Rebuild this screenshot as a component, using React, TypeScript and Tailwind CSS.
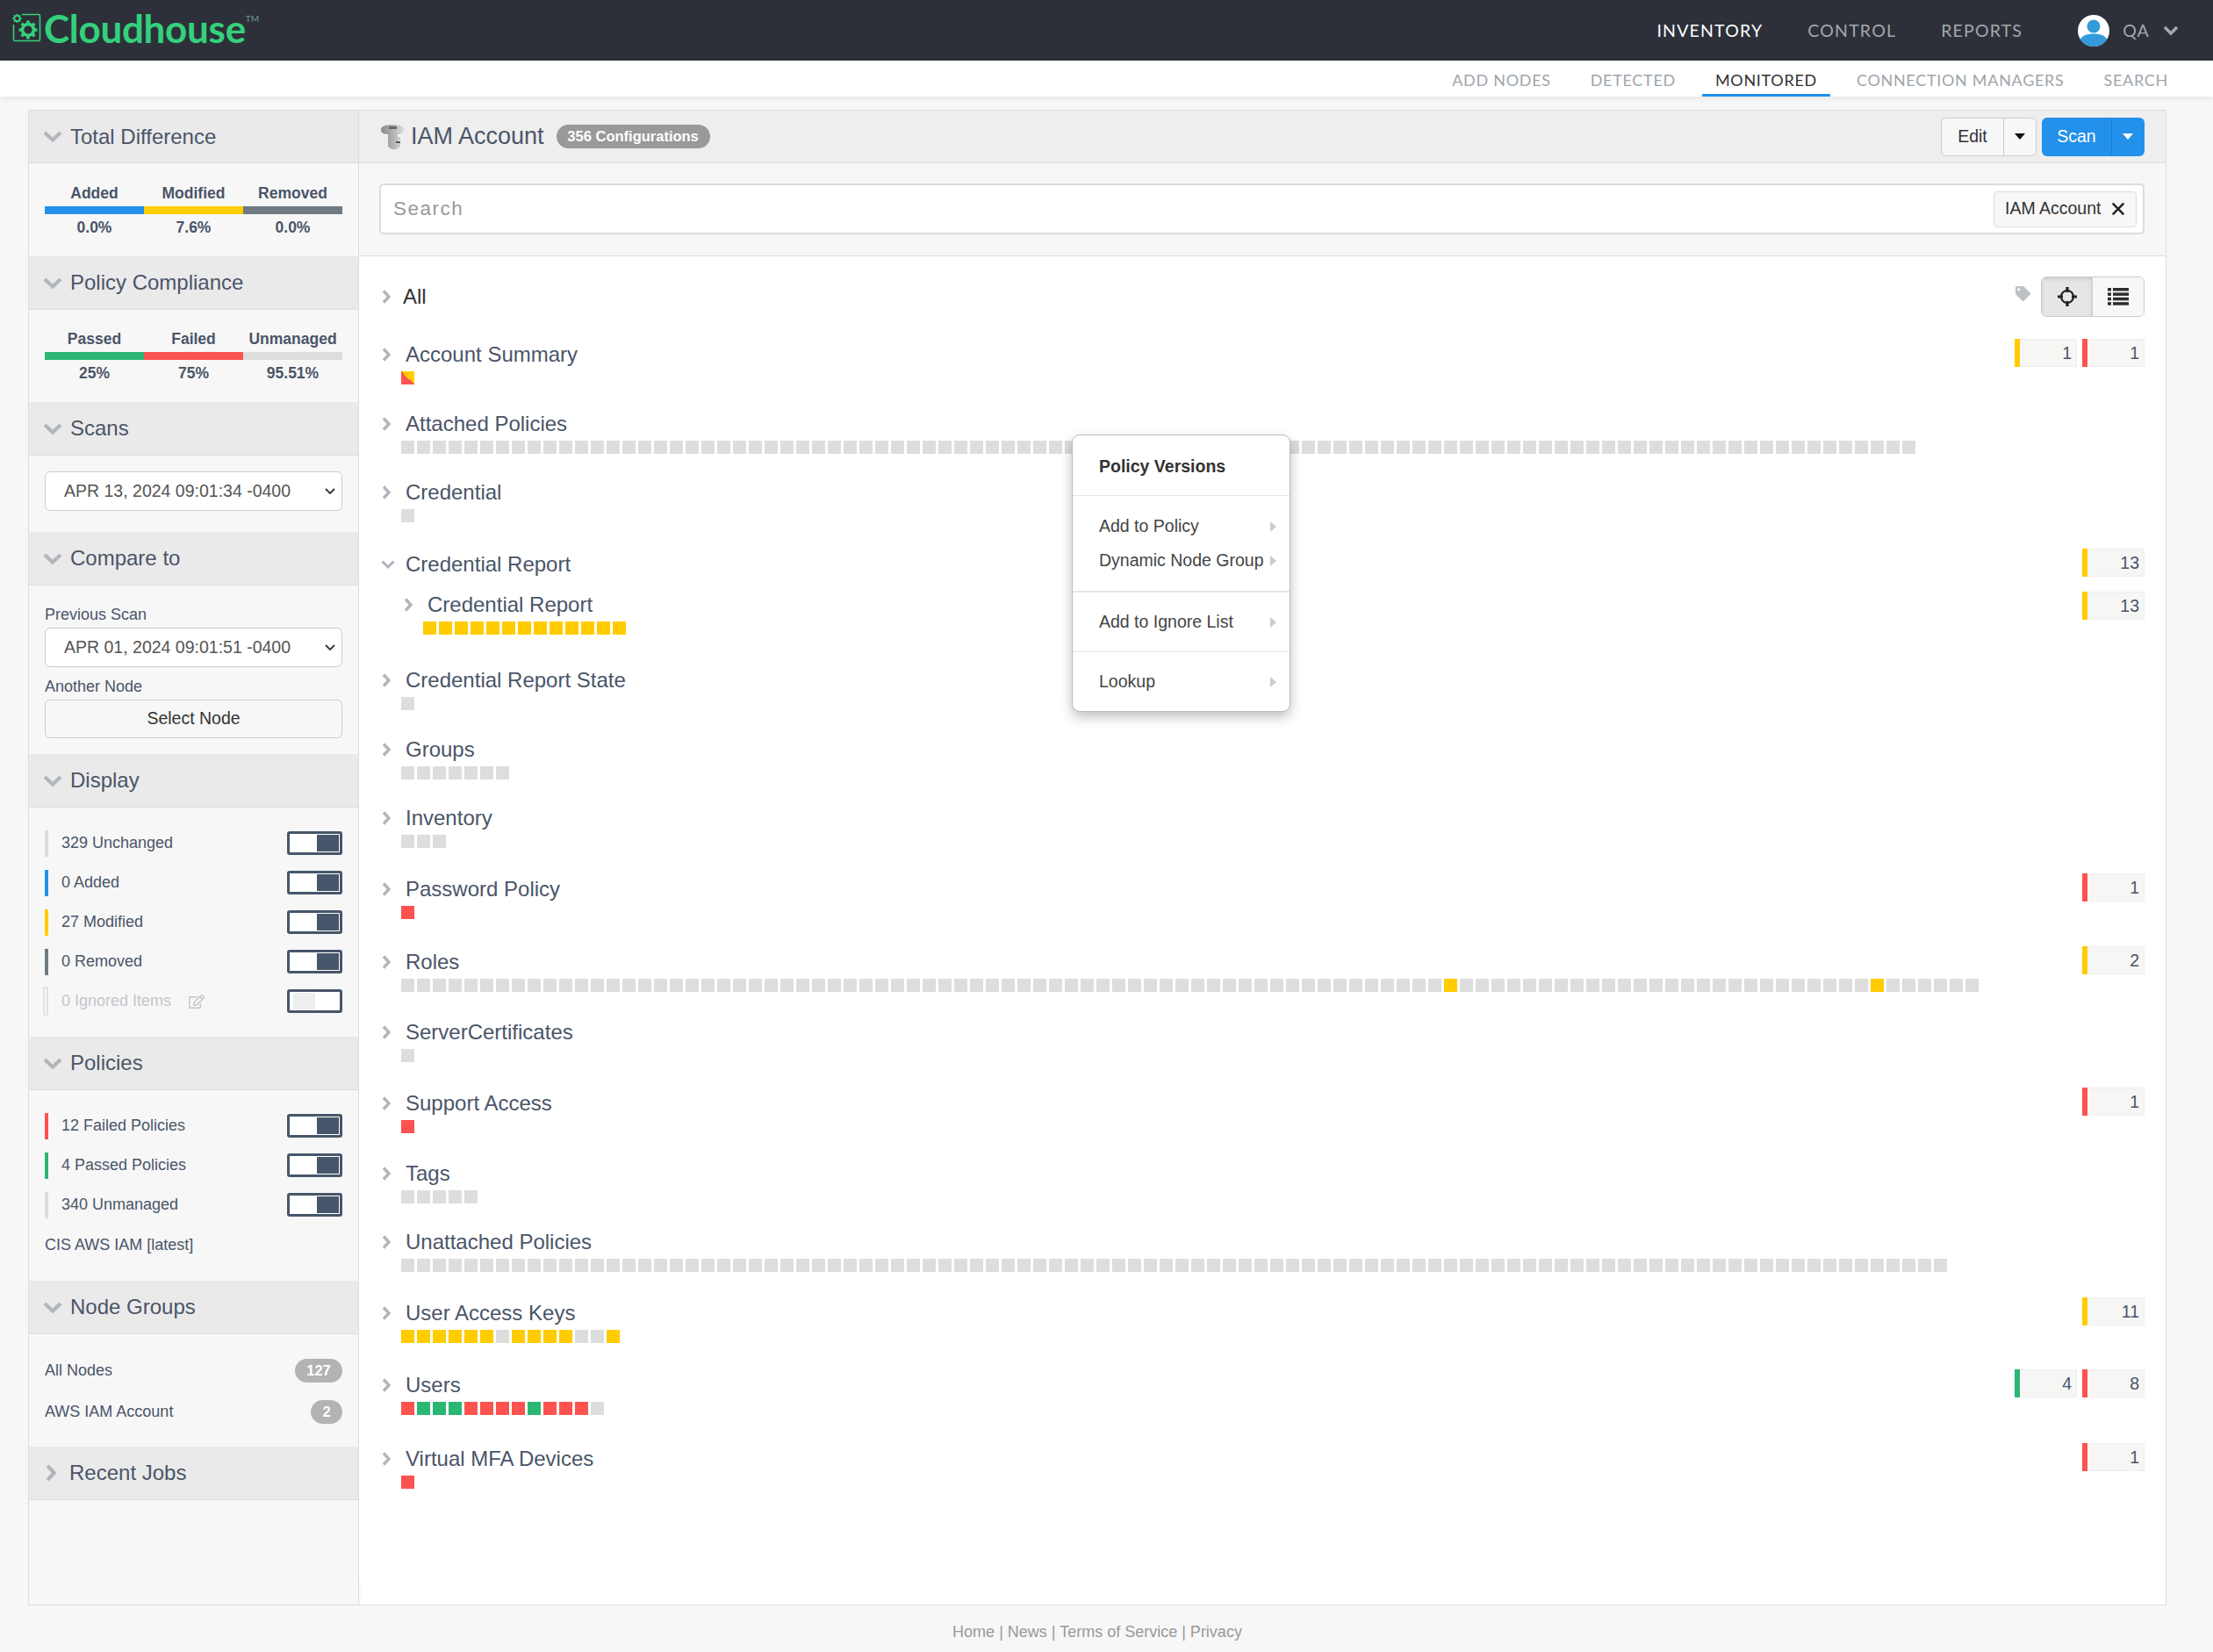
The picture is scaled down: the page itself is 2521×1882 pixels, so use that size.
import { FaRegEdit, FaTag } from "react-icons/fa";

const yellow = "bg-[#ffcc00]";
const red = "bg-[#fc5350]";
const green = "bg-[#2bb673]";
const gray = "bg-[#dddddd]";
const split = "bg-[linear-gradient(to_top_right,#fc5350_50%,#ffcc00_50%)]";

const many = (n: number, c = gray) => Array.from({ length: n }, () => c);

const rolesSquares = many(100).map((c, i) => (i === 66 || i === 93 ? yellow : c));

type Row = {
  name: string;
  height: string;
  squares?: string[];
  badges?: [string, number][];
  open?: boolean;
  sub?: boolean;
};

const rows: Row[] = [
  { name: "Account Summary", height: "h-[79px]", squares: [split], badges: [[yellow, 1], [red, 1]] },
  { name: "Attached Policies", height: "h-[78px]", squares: many(96) },
  { name: "Credential", height: "h-[82px]", squares: many(1) },
  { name: "Credential Report", height: "h-[46px]", open: true, badges: [[yellow, 13]] },
  { name: "Credential Report", height: "h-[86px]", sub: true, squares: many(13, yellow), badges: [[yellow, 13]] },
  { name: "Credential Report State", height: "h-[79px]", squares: many(1) },
  { name: "Groups", height: "h-[78px]", squares: many(7) },
  { name: "Inventory", height: "h-[81px]", squares: many(3) },
  { name: "Password Policy", height: "h-[83px]", squares: [red], badges: [[red, 1]] },
  { name: "Roles", height: "h-[80px]", squares: rolesSquares, badges: [[yellow, 2]] },
  { name: "ServerCertificates", height: "h-[81px]", squares: many(1) },
  { name: "Support Access", height: "h-[80px]", squares: [red], badges: [[red, 1]] },
  { name: "Tags", height: "h-[78px]", squares: many(5) },
  { name: "Unattached Policies", height: "h-[81px]", squares: many(98) },
  {
    name: "User Access Keys",
    height: "h-[82px]",
    squares: [...many(6, yellow), gray, ...many(4, yellow), gray, gray, yellow],
    badges: [[yellow, 11]],
  },
  {
    name: "Users",
    height: "h-[84px]",
    squares: [red, green, green, green, red, red, red, red, green, red, red, red, gray],
    badges: [[green, 4], [red, 8]],
  },
  { name: "Virtual MFA Devices", height: "h-[70px]", squares: [red], badges: [[red, 1]] },
];

const ChevronRight = ({ className = "" }: { className?: string }) => (
  <svg viewBox="0 0 11 16" className={"w-[11px] h-[16px] shrink-0 " + className} fill="none">
    <path d="M2 1.500l6 6.500-6 6.500" stroke="#b1b6bd" strokeWidth="3.400" />
  </svg>
);

const ChevronDown = ({ className = "w-[22px] h-[13px]" }: { className?: string }) => (
  <svg viewBox="0 0 22 13" className={"shrink-0 " + className} fill="none">
    <path d="M2 2l9 8.500L20 2" stroke="#b1b6bd" strokeWidth="4.200" />
  </svg>
);

const Gear = ({ cx, cy, r }: { cx: number; cy: number; r: number }) => (
  <g stroke="#34d07b" fill="none">
    <circle cx={cx} cy={cy} r={r} strokeWidth={r * 0.55} />
    {[0, 45, 90, 135].map((a) => (
      <line
        key={a}
        x1={cx - r * 1.6}
        y1={cy}
        x2={cx + r * 1.6}
        y2={cy}
        strokeWidth={r * 0.55}
        transform={`rotate(${a} ${cx} ${cy})`}
        strokeDasharray={`${r * 0.85} ${r * 1.5}`}
      />
    ))}
  </g>
);

const Logo = () => (
  <div className="flex items-center -mt-[6px]">
    <svg viewBox="0 0 33 33" className="w-[33px] h-[33px] ml-[14px] mr-[3px]" fill="none">
      <path d="M11 1.500h19a1.500 1.500 0 0 1 1.500 1.500v27a1.500 1.500 0 0 1-1.500 1.500H3A1.500 1.500 0 0 1 1.500 30V13" stroke="#34d07b" strokeWidth="1.600" />
      <Gear cx={5.5} cy={6} r={3.2} />
      <Gear cx={18} cy={19} r={6.5} />
    </svg>
    <span className="font-['Lato',sans-serif] text-[44px] leading-none font-bold text-[#34d07b] tracking-[-0.3px]">Cloudhouse</span>
    <span className="font-['Lato',sans-serif] text-[10px] leading-none text-[#6f9c88] self-start mt-[6px]">TM</span>
  </div>
);

const Avatar = () => (
  <svg viewBox="0 0 36 36" className="w-[36px] h-[36px]">
    <circle cx="18" cy="18" r="18" fill="#fff" />
    <circle cx="18" cy="13" r="7.500" fill="#339bdb" />
    <path d="M2.600 27.500C6 23 11 21.500 18 21.500s12 1.500 15.400 6A18 18 0 0 1 2.600 27.500z" fill="#339bdb" />
  </svg>
);

const KeyIcon = () => (
  <svg viewBox="0 0 30 32" className="w-[30px] h-[32px]">
    <defs>
      <linearGradient id="keyShade" x1="0" x2="1" y1="0" y2="0">
        <stop offset="0" stopColor="#8a8a8a" />
        <stop offset="0.55" stopColor="#b5b5b5" />
        <stop offset="1" stopColor="#dcdcdc" />
      </linearGradient>
    </defs>
    <path d="M2 8c0-4 5-6 13-6s13 2 13 6-4 5-7 5v3h3v4h-3v3h3v4l-4 3h-6l-4-3V13C6 13 2 12 2 8z" fill="url(#keyShade)" />
    <rect x="11" y="4" width="9" height="3" fill="#666" />
    <rect x="19" y="21" width="5" height="2" fill="#555" />
  </svg>
);

const Crosshair = () => (
  <svg viewBox="0 0 24 24" className="w-[24px] h-[24px]" fill="none" stroke="#222">
    <circle cx="12" cy="12" r="7" strokeWidth="2.200" />
    <path d="M12 1v6M12 17v6M1 12h6M17 12h6" strokeWidth="3.200" />
  </svg>
);

const ListIcon = () => (
  <svg viewBox="0 0 24 20" className="w-[24px] h-[20px]" fill="#2d2d2d">
    {[0, 5.4, 10.8, 16.2].map((y) => (
      <g key={y}>
        <rect x="0" y={y} width="4" height="3.500" />
        <rect x="6" y={y} width="18" height="3.500" />
      </g>
    ))}
  </svg>
);

const SectionHead = ({ title, closed, first }: { title: string; closed?: boolean; first?: boolean }) => (
  <div className={"shrink-0 flex items-center bg-[#eaeaea] border-b border-[#dddddd] text-[24px] text-[#4a5568] " + (first ? "h-[60px]" : "h-[61px]")}>
    {closed ? <ChevronRight className="ml-[20px] mr-[15px] scale-125" /> : <ChevronDown className="w-[22px] h-[13px] ml-[16px] mr-[9px]" />}
    <span className="leading-none">{title}</span>
  </div>
);

const StatBars = ({ items }: { items: [string, string, string][] }) => (
  <div className="grid grid-cols-3 w-[339px] text-[#4a5568] text-[17.5px] font-bold">
    {items.map(([label, value, color]) => (
      <div key={label} className="flex flex-col items-center">
        <span className="leading-[24px] h-[27px] whitespace-nowrap">{label}</span>
        <span className={"w-full h-[9px] " + color} />
        <span className="leading-[30px]">{value}</span>
      </div>
    ))}
  </div>
);

const DateSelect = ({ value }: { value: string }) => (
  <div className="relative w-[339px] h-[45px]">
    <select
      defaultValue={value}
      className="w-full h-full appearance-none bg-white border border-[#cccccc] rounded-[6px] pl-[21px] text-[19.5px] text-[#555555]"
    >
      <option>{value}</option>
    </select>
    <svg viewBox="0 0 12 8" className="absolute right-[8px] top-[19px] w-[12px] h-[8px]" fill="none">
      <path d="M1 1l5 5 5-5" stroke="#333" strokeWidth="1.800" />
    </svg>
  </div>
);

const Toggle = ({ on = true }: { on?: boolean }) => (
  <div className={"w-[63px] h-[27px] border-[3px] border-[#47566a] rounded-[3px] bg-white flex p-[1px] " + (on ? "justify-end" : "justify-start pl-[4px]")}>
    <span className={"w-[25px] h-full " + (on ? "bg-[#47566a]" : "bg-[#eeeeee]")} />
  </div>
);

const ToggleRow = ({ label, color, on, muted, icon }: { label: string; color: string; on?: boolean; muted?: boolean; icon?: boolean }) => (
  <div className="h-[45px] flex items-center">
    {muted ? (
      <span className="w-[6px] h-[33px] -ml-[2px] mr-[15px] border-2 border-[#e2e2e2]" />
    ) : (
      <span className={"w-[4px] h-[30px] mr-[15px] " + color} />
    )}
    <span className={"text-[18px] " + (muted ? "text-[#c3c7cc]" : "text-[#4a5568]")}>{label}</span>
    {icon && <FaRegEdit className="ml-[20px] w-[18px] h-[18px] text-[#c3c7cc]" />}
    <span className="ml-auto">
      <Toggle on={on} />
    </span>
  </div>
);

const MenuItem = ({ label }: { label: string }) => (
  <div className="h-[39px] flex items-center justify-between pl-[30px] pr-[15px] text-[19.5px] text-[#444444]">
    <span className="whitespace-nowrap">{label}</span>
    <span className="w-0 h-0 border-y-[6px] border-y-transparent border-l-[7px] border-l-[#cccccc]" />
  </div>
);

const TreeRow = ({ row }: { row: Row }) => (
  <div className={"flex justify-between pr-[24px] " + row.height + " " + (row.sub ? "pl-[51px]" : "pl-[26px]")}>
    <div>
      <div className="flex items-center h-[30px]">
        {row.open ? (
          <ChevronDown className="w-[16px] h-[10px] -ml-[1px] mr-[12px]" />
        ) : (
          <ChevronRight className="mr-[16px]" />
        )}
        <span className="text-[24px] leading-[30px] text-[#4a5568] whitespace-nowrap">{row.name}</span>
      </div>
      {row.squares && (
        <div className="flex gap-[3px] ml-[22px] mt-[4px]">
          {row.squares.map((c, i) => (
            <span key={i} className={"w-[15px] h-[15px] " + c} />
          ))}
        </div>
      )}
    </div>
    {row.badges && (
      <div className={"flex gap-[6px] h-[32px] " + (row.sub ? "mt-0" : "-mt-[3px]")}>
        {row.badges.map(([c, n], i) => (
          <div key={i} className="flex w-[71px]">
            <span className={"w-[6px] " + c} />
            <span className="flex-1 bg-[#f6f6f4] border border-[#eeeeee] border-l-0 text-right pr-[5px] text-[19.5px] leading-[30px] text-[#4a5568]">
              {n}
            </span>
          </div>
        ))}
      </div>
    )}
  </div>
);

export default function App() {
  return (
    <div className="relative min-h-[1882px] bg-[#f7f7f7] font-['Liberation_Sans',Arial,sans-serif] flex flex-col">
      <header className="h-[69px] bg-[#2d3039] flex items-center justify-between">
        <Logo />
        <nav className="flex items-center font-['Lato',sans-serif] text-[19.5px] tracking-[1.2px] text-[#a3a8ae]">
          <span className="text-white mr-[51px]">INVENTORY</span>
          <span className="mr-[51px]">CONTROL</span>
          <span className="mr-[63px]">REPORTS</span>
          <Avatar />
          <span className="ml-[15px] mr-[15px]">QA</span>
          <svg viewBox="0 0 18 12" className="w-[18px] h-[12px] mr-[39px]" fill="none">
            <path d="M2 2l7 7 7-7" stroke="#a3a8ae" strokeWidth="3.500" />
          </svg>
        </nav>
      </header>

      <div className="h-[41px] bg-white shadow-[0_2px_6px_rgba(0,0,0,0.08)] flex justify-end items-stretch gap-[15px] pr-[36px] font-['Lato',sans-serif] text-[18px] tracking-[0.7px] text-[#a0a5ab]">
        <span className="px-[15px] pt-[6px] flex items-center border-b-[3px] border-transparent">ADD NODES</span>
        <span className="px-[15px] pt-[6px] flex items-center border-b-[3px] border-transparent">DETECTED</span>
        <span className="px-[15px] pt-[6px] flex items-center text-[#333333] border-b-[3px] border-[#2391eb]">MONITORED</span>
        <span className="px-[15px] pt-[6px] flex items-center border-b-[3px] border-transparent">CONNECTION MANAGERS</span>
        <span className="px-[15px] pt-[6px] flex items-center border-b-[3px] border-transparent">SEARCH</span>
      </div>

      <div className="relative mt-[15px] ml-[32px] w-[2436px] h-[1704px] border border-[#dddddd] flex">
        <aside className="w-[376px] shrink-0 border-r border-[#dddddd] flex flex-col">
          <SectionHead title="Total Difference" first />
          <div className="h-[106px] pl-[18px] pt-[22px]">
            <StatBars
              items={[
                ["Added", "0.0%", "bg-[#2391eb]"],
                ["Modified", "7.6%", "bg-[#ffcc00]"],
                ["Removed", "0.0%", "bg-[#717a81]"],
              ]}
            />
          </div>
          <SectionHead title="Policy Compliance" />
          <div className="h-[105px] pl-[18px] pt-[21px]">
            <StatBars
              items={[
                ["Passed", "25%", "bg-[#2bb673]"],
                ["Failed", "75%", "bg-[#fc5350]"],
                ["Unmanaged", "95.51%", "bg-[#dddddd]"],
              ]}
            />
          </div>
          <SectionHead title="Scans" />
          <div className="h-[87px] pl-[18px] pt-[18px]">
            <DateSelect value="APR 13, 2024 09:01:34 -0400" />
          </div>
          <SectionHead title="Compare to" />
          <div className="h-[192px] pl-[18px] pt-[18px] text-[18px] text-[#4a5568]">
            <div className="leading-[30px]">Previous Scan</div>
            <DateSelect value="APR 01, 2024 09:01:51 -0400" />
            <div className="leading-[30px] pt-[7px]">Another Node</div>
            <button className="w-[339px] h-[44px] bg-[#f7f7f7] border border-[#cccccc] rounded-[6px] text-[19.5px] text-[#333333]">Select Node</button>
          </div>
          <SectionHead title="Display" />
          <div className="h-[261px] px-[18px] pt-[18px]">
            <ToggleRow label="329 Unchanged" color="bg-[#dddddd]" on />
            <ToggleRow label="0 Added" color="bg-[#2391eb]" on />
            <ToggleRow label="27 Modified" color="bg-[#ffcc00]" on />
            <ToggleRow label="0 Removed" color="bg-[#717a81]" on />
            <ToggleRow label="0 Ignored Items" color="" muted icon on={false} />
          </div>
          <SectionHead title="Policies" />
          <div className="h-[217px] px-[18px] pt-[18px]">
            <ToggleRow label="12 Failed Policies" color="bg-[#fc5350]" on />
            <ToggleRow label="4 Passed Policies" color="bg-[#2bb673]" on />
            <ToggleRow label="340 Unmanaged" color="bg-[#dddddd]" on />
            <div className="text-[18px] leading-[30px] mt-[8px] text-[#4a5568]">CIS AWS IAM [latest]</div>
          </div>
          <SectionHead title="Node Groups" />
          <div className="h-[128px] px-[18px] pt-[28px] text-[18px] text-[#4a5568]">
            <div className="flex items-center justify-between h-[27px] mb-[20px]">
              <span>All Nodes</span>
              <span className="h-[27px] w-[54px] rounded-full bg-[#b3b3b3] text-white font-bold text-[16.5px] leading-[27px] text-center">127</span>
            </div>
            <div className="flex items-center justify-between h-[27px]">
              <span>AWS IAM Account</span>
              <span className="h-[27px] w-[36px] rounded-full bg-[#b3b3b3] text-white font-bold text-[16.5px] leading-[27px] text-center">2</span>
            </div>
          </div>
          <SectionHead title="Recent Jobs" closed />
        </aside>

        <main className="flex-1 flex flex-col min-w-0">
          <div className="h-[60px] shrink-0 bg-[#eeeeee] border-b border-[#dddddd] flex items-center pl-[23px] pr-[24px]">
            <KeyIcon />
            <span className="ml-[6px] text-[27px] text-[#4a5568] leading-none">IAM Account</span>
            <span className="ml-[14px] h-[27px] w-[175px] rounded-full bg-[#999999] text-white font-bold text-[16.5px] leading-[27px] text-center">356 Configurations</span>
            <div className="ml-auto flex gap-[6px] h-[44px]">
              <div className="flex w-[109px] border border-[#cccccc] rounded-[6px] bg-[#f7f7f7] text-[19.5px] text-[#333333]">
                <span className="w-[71px] flex items-center justify-center border-r border-[#cccccc]">Edit</span>
                <span className="flex-1 flex items-center justify-center">
                  <span className="w-0 h-0 border-x-[6px] border-x-transparent border-t-[7px] border-t-[#111111]" />
                </span>
              </div>
              <div className="flex w-[117px] rounded-[6px] bg-[#2391eb] text-[19.5px] text-white">
                <span className="w-[80px] flex items-center justify-center border-r border-[#1c7fd0]">Scan</span>
                <span className="flex-1 flex items-center justify-center pr-[2px]">
                  <span className="w-0 h-0 border-x-[6px] border-x-transparent border-t-[7px] border-t-white" />
                </span>
              </div>
            </div>
          </div>

          <div className="h-[106px] shrink-0 bg-[#f7f7f7] border-b border-[#dddddd] pl-[23px] pr-[24px] pt-[23px]">
            <div className="h-[58px] bg-white border-2 border-[#dcdcdc] rounded-[5px] flex items-center pl-[14px] pr-[7px]">
              <input
                placeholder="Search"
                className="flex-1 outline-none text-[22.5px] tracking-[1.5px] placeholder:text-[#999999]"
              />
              <div className="h-[41px] w-[163px] border border-[#dddddd] bg-[#f7f7f7] rounded-[4px] flex items-center pl-[12px] text-[19.5px] text-[#333333] whitespace-nowrap">
                IAM Account
                <svg viewBox="0 0 14 14" className="w-[16px] h-[16px] ml-[12px]" fill="none">
                  <path d="M1.500 1.500l11 11M12.500 1.500l-11 11" stroke="#222" strokeWidth="2.200" />
                </svg>
              </div>
            </div>
          </div>

          <div className="flex-1 bg-white pt-[31px]">
            <div className="h-[66px] flex justify-between pl-[26px] pr-[24px]">
              <div className="flex items-center h-[30px]">
                <ChevronRight className="mr-[13px]" />
                <span className="text-[24px] leading-[30px] text-[#333333]">All</span>
              </div>
              <div className="flex -mt-[8px] h-[46px]">
                <FaTag className="w-[17px] h-[17px] text-[#bcc1c8] mt-[11px] mr-[12px]" />
                <div className="flex w-[118px] border border-[#cccccc] rounded-[6px] overflow-hidden">
                  <span className="w-[58px] bg-[#e6e6e6] shadow-[inset_0_2px_4px_rgba(0,0,0,0.12)] border-r border-[#cccccc] flex items-center justify-center">
                    <Crosshair />
                  </span>
                  <span className="flex-1 bg-[#f7f7f7] flex items-center justify-center">
                    <ListIcon />
                  </span>
                </div>
              </div>
            </div>
            {rows.map((row, i) => (
              <TreeRow key={i} row={row} />
            ))}
          </div>
        </main>

        {/* small sliver left at the bottom of the sidebar edge */}
        <span className="absolute left-[376px] bottom-0 w-[2px] h-[25px] bg-[#f7f7f7]" />
      </div>

      <footer className="flex-1 ml-[32px] w-[2436px] pt-[7px] flex items-center justify-center text-[18px] text-[#999999]">
        Home | News | Terms of Service | Privacy
      </footer>

      {/* context menu floats over the tree */}
      <div className="absolute left-[1221px] top-[495px] w-[249px] h-[316px] bg-white border border-[#bbbbbb] rounded-[9px] shadow-[0_6px_14px_rgba(0,0,0,0.25)]">
        <div className="h-[69px] pt-[4px] flex items-center pl-[30px] text-[19.5px] font-bold text-[#333333] border-b border-[#e5e5e5]">Policy Versions</div>
        <div className="py-[15px] border-b-2 border-[#e5e5e5]">
          <MenuItem label="Add to Policy" />
          <MenuItem label="Dynamic Node Group" />
        </div>
        <div className="py-[14px] border-b border-[#e5e5e5]">
          <MenuItem label="Add to Ignore List" />
        </div>
        <div className="pt-[14px]">
          <MenuItem label="Lookup" />
        </div>
      </div>
    </div>
  );
}
